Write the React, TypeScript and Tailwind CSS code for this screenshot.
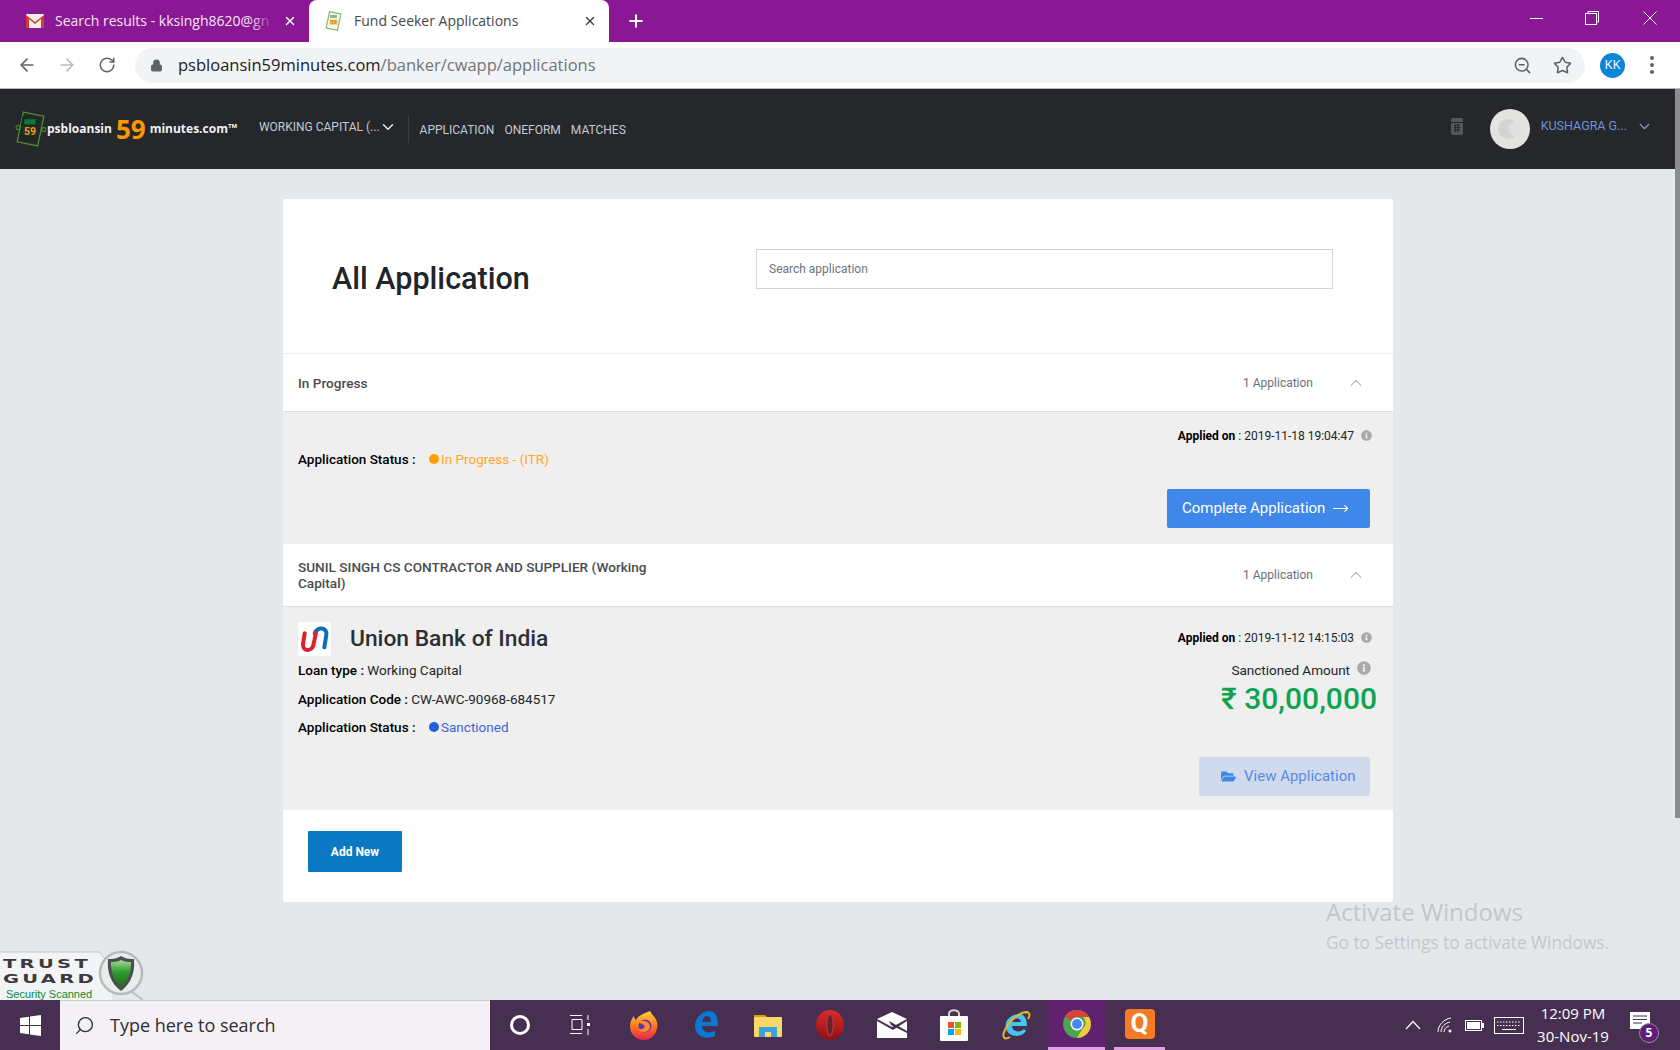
import { ArrowLeft, ArrowRight, ChevronDown, ChevronUp, Lock, MoveRight, Plus, RotateCw, Search, Star, X, ZoomOut } from 'lucide-react';
import { FaFolderOpen, FaInfoCircle } from 'react-icons/fa';

const sans = "font-['Roboto',sans-serif]";
const win = "font-['Open_Sans',sans-serif]";

function GmailIcon() {
  return (
    <svg width="18" height="14" viewBox="0 0 18 14">
      <rect width="18" height="14" rx="1" fill="#f3efe9" />
      <path d="M0 1 L9 8 L18 1 V14 H15 V5 L9 10 L3 5 V14 H0 Z" fill="#d5392c" />
    </svg>
  );
}

function PsbLogo() {
  return (
    <svg width="31" height="36" viewBox="0 0 30 35">
      <path d="M8 1 L28 5 L22 34 L2 30 Z" fill="none" stroke="#4f8f2f" strokeWidth="1.2" />
      <path d="M7 5 L24 7 L20 30 L4 27 Z" fill="#1b2a22" />
      <rect x="9" y="8" width="11" height="5" fill="#0f7a35" />
      <rect x="7" y="15" width="15" height="9" fill="#1c2f3d" />
      <text x="14.5" y="23" textAnchor="middle" fontSize="10" fontWeight="700" fill="#ff9800" fontFamily="Roboto">59</text>
      <circle cx="3" cy="16" r="2" fill="none" stroke="#4f8f2f" />
      <circle cx="28" cy="18" r="2" fill="none" stroke="#4f8f2f" />
    </svg>
  );
}

function TabFavicon() {
  return (
    <svg width="17" height="20" viewBox="0 0 30 35">
      <path d="M8 1 L28 5 L22 34 L2 30 Z" fill="#f4f8ee" stroke="#86b46a" strokeWidth="2" />
      <rect x="9" y="7" width="12" height="5" fill="#7fb08c" />
      <rect x="8" y="15" width="14" height="9" fill="#f6c26a" />
      <text x="15" y="23" textAnchor="middle" fontSize="10" fontWeight="700" fill="#e88a00" fontFamily="Roboto">59</text>
    </svg>
  );
}

function TabStrip() {
  return (
    <div className={`flex h-[42px] items-end bg-[#8a1793] ${win}`}>
      <div className="flex h-[42px] w-[309px] items-center pl-[26px] pr-[10px]">
        <GmailIcon />
        <div className="relative ml-[11px] w-[220px] -translate-y-[1px]">
          <span className="whitespace-nowrap text-[14px] text-[#f4e6f5]">Search results - kksingh8620@gn</span>
          <div className="absolute inset-y-0 right-0 w-[26px] bg-gradient-to-r from-transparent to-[#8a1793]" />
        </div>
        <X size={14} strokeWidth={2.5} className="ml-[8px] text-white" />
      </div>
      <div className="flex h-[42px] w-[300px] items-center rounded-t-[8px] bg-white pl-[16px] pr-[12px]">
        <TabFavicon />
        <span className="ml-[12px] flex-1 -translate-y-[1px] text-[14px] text-[#45484c]">Fund Seeker Applications</span>
        <X size={14} strokeWidth={2.5} className="text-[#3c4043]" />
      </div>
      <div className="flex h-[42px] w-[54px] items-center justify-center">
        <Plus size={20} strokeWidth={2.5} className="text-white" />
      </div>
      <div className="ml-auto flex h-[42px] items-center text-white">
        <div className="flex w-[56px] justify-center"><div className="h-px w-[13px] -translate-y-[3px] bg-white" /></div>
        <div className="flex w-[56px] justify-center">
          <svg width="14" height="14" viewBox="0 0 14 14" fill="none" stroke="white" className="-translate-y-[3px]">
            <rect x="0.5" y="2.5" width="11" height="11" />
            <path d="M3 2.5 V0.5 H13.5 V11 H11.5" />
          </svg>
        </div>
        <div className="flex w-[60px] justify-center">
          <svg width="14" height="14" viewBox="0 0 14 14" stroke="white" className="-translate-y-[3px]"><path d="M0.5 0.5 L13.5 13.5 M13.5 0.5 L0.5 13.5" /></svg>
        </div>
      </div>
    </div>
  );
}

function Toolbar() {
  return (
    <div className={`flex h-[47px] items-center border-b border-[#b9b9b9] bg-white ${win}`}>
      <ArrowLeft size={20} strokeWidth={2} className="ml-[17px] text-[#5f6368]" />
      <ArrowRight size={20} strokeWidth={2} className="ml-[20px] text-[#b8babd]" />
      <RotateCw size={18} strokeWidth={2} className="ml-[21px] text-[#5f6368]" />
      <div className="ml-[19px] flex h-[35px] w-[1450px] items-center rounded-full bg-[#f1f3f4] pl-[15px] pr-[13px]">
        <Lock size={13} fill="#5f6368" className="text-[#5f6368]" />
        <span className="ml-[15px] text-[16.5px] text-[#202124]">psbloansin59minutes.com<span className="text-[#70757a]">/banker/cwapp/applications</span></span>
        <ZoomOut size={19} strokeWidth={2} className="ml-auto text-[#5f6368]" />
        <Star size={19} strokeWidth={2} className="ml-[21px] text-[#5f6368]" />
      </div>
      <div className="ml-[15px] flex h-[25px] w-[25px] items-center justify-center rounded-full bg-[#0b86d6] text-[13px] text-white">KK</div>
      <div className="ml-[25px] flex flex-col gap-[3px]">
        <div className="h-[4px] w-[4px] rounded-full bg-[#5f6368]" />
        <div className="h-[4px] w-[4px] rounded-full bg-[#5f6368]" />
        <div className="h-[4px] w-[4px] rounded-full bg-[#5f6368]" />
      </div>
    </div>
  );
}

function NavBar() {
  return (
    <header className={`flex h-[80px] items-center bg-[#25272a] ${sans}`}>
      <div className="ml-[15px] flex items-center">
        <PsbLogo />
        <span className={`ml-[1px] text-[12px] font-bold text-[#eef0f1] ${win}`}>psbloansin</span>
        <span className={`ml-[4px] text-[26px] leading-none font-bold text-[#ff9800] ${win}`}>59</span>
        <span className={`ml-[4px] text-[12px] font-bold text-[#eef0f1] ${win}`}>minutes.com</span>
        <span className="-mt-[8px] text-[6px] font-bold text-white">TM</span>
      </div>
      <div className="ml-[22px] flex -translate-y-[2px] items-center text-[12px] text-[#c3cad4]">
        <span>WORKING CAPITAL (...</span>
        <ChevronDown size={18} strokeWidth={2} className="-ml-[1px] text-[#e4e8eb]" />
      </div>
      <div className="ml-[11px] h-[27px] w-px bg-[#3c3e42]" />
      <nav className="ml-[11px] flex gap-[10px] pt-[2px] text-[12px] text-[#c3cad4]">
        <span>APPLICATION</span>
        <span>ONEFORM</span>
        <span>MATCHES</span>
      </nav>
      <svg width="12" height="17" viewBox="0 0 12 17" className="ml-auto -translate-y-[3px]">
        <rect width="12" height="17" rx="2" fill="#53565a" />
        <rect x="0" y="4" width="12" height="1" fill="#25272a" />
        <path d="M3 7 H9 M3 9.5 H9 M3 12 H9 M4.5 7 V14 M7 7 V14" stroke="#25272a" />
      </svg>
      <div className="relative ml-[27px] h-[40px] w-[40px] rounded-full bg-[#e3e4e2]">
        <div className="absolute top-[10px] left-[8px] h-[20px] w-[20px] rounded-full bg-[#d3d4d2]" />
        <div className="absolute top-[13px] left-[18px] h-[14px] w-[14px] rounded-full bg-[#dfe0de]" />
      </div>
      <span className="ml-[11px] -translate-y-[3px] text-[12.5px] text-[#6f92d8]">KUSHAGRA G...</span>
      <ChevronDown size={17} strokeWidth={1.75} className="mr-[22px] ml-[9px] -translate-y-[3px] text-[#8ea6d8]" />
    </header>
  );
}

function SectionRow({ title, height, titleClass }: { title: string; height: string; titleClass?: string }) {
  return (
    <div className={`flex items-center border-b border-[#dcdfe1] pr-[27px] pl-[15px] ${height}`}>
      <div className={`text-[13.6px] leading-[16px] font-medium text-[#4a4c4f] ${titleClass ?? ''}`}>{title}</div>
      <span className="ml-auto text-[12px] text-[#6c7075]">1 Application</span>
      <ChevronUp size={20} strokeWidth={1.25} className="ml-[33px] text-[#a3a6a9]" />
    </div>
  );
}

function Applied({ date }: { date: string }) {
  return (
    <div className="-mr-[2px] flex items-center justify-end text-[12px] leading-[18px] text-[#212529]">
      <span><b className="font-bold text-black">Applied on</b> : {date}</span>
      <FaInfoCircle size={11} className="ml-[7px] -translate-y-[1px] text-[#a9a9a9]" />
    </div>
  );
}

function Status({ color, dot, label }: { color: string; dot: string; label: string }) {
  return (
    <div className="flex items-center text-[13.5px] leading-[20px]">
      <span className="w-[131px] font-medium text-black">Application Status :</span>
      <span className={`h-[10px] w-[10px] rounded-full ${dot}`} />
      <span className={`ml-[2px] ${color}`}>{label}</span>
    </div>
  );
}

function UnionLogo() {
  return (
    <div className="flex h-[34px] w-[33px] items-center justify-center rounded-[3px] bg-white">
      <svg width="33" height="34" viewBox="0 0 99 102" fill="none" strokeWidth="12" strokeLinecap="round">
        <path d="M50 34 C58 12 88 16 85 38 L79 76" stroke="#0a6fb7" />
        <path d="M20 34 L15 66 C13 88 40 90 46 70 L54 32" stroke="#e0202f" />
      </svg>
    </div>
  );
}

function AppCard() {
  return (
    <section className={`ml-[283px] w-[1110px] rounded-[2px] bg-white ${sans}`}>
      <div className="flex h-[155px] items-start border-b border-[#eceeef] pt-[50px] pr-[60px] pl-[49px]">
        <h1 className="mt-[10px] text-[30.5px] leading-[40px] font-medium text-[#212529]">All Application</h1>
        <div className="ml-auto flex h-[40px] w-[577px] items-center border border-[#ced4da] bg-white pl-[12px] text-[12px] text-[#6c757d]">
          Search application
        </div>
      </div>

      <SectionRow title="In Progress" height="h-[58px]" />
      <div className="h-[132px] bg-[#efefef] pt-[15px] pr-[23px] pl-[15px]">
        <div className="flex items-start">
          <div className="pt-[22px]">
            <Status color="text-[#ffa726]" dot="bg-[#ff9c00]" label="In Progress - (ITR)" />
          </div>
          <div className="ml-auto"><Applied date="2019-11-18 19:04:47" /></div>
        </div>
        <div className="mt-[20px] flex justify-end">
          <button className="flex h-[39px] w-[203px] items-center rounded-[2px] bg-[#3f87e8] pl-[15px] text-[15px] text-white">
            Complete Application
            <MoveRight size={17} strokeWidth={1.5} className="ml-[7px]" />
          </button>
        </div>
      </div>

      <SectionRow title="SUNIL SINGH CS CONTRACTOR AND SUPPLIER (Working Capital)" height="h-[63px]" titleClass="w-[370px]" />
      <div className="flex h-[203px] bg-[#efefef] pr-[23px] pl-[15px]">
        <div className="pt-[15px]">
          <div className="flex h-[34px] items-center">
            <UnionLogo />
            <span className="ml-[19px] text-[22.8px] font-medium text-[#2b3036]">Union Bank of India</span>
          </div>
          <div className="mt-[4px] text-[13.5px] leading-[20px] text-[#212529]"><b className="font-medium text-black">Loan type :</b> Working Capital</div>
          <div className="mt-[9px] text-[13.5px] leading-[20px] text-[#212529]"><b className="font-medium text-black">Application Code :</b> CW-AWC-90968-684517</div>
          <div className="mt-[8px]"><Status color="text-[#3f62d8]" dot="bg-[#2160dd]" label="Sanctioned" /></div>
        </div>
        <div className="ml-auto flex flex-col items-end pt-[22px]">
          <Applied date="2019-11-12 14:15:03" />
          <div className="-mr-[1px] mt-[13px] flex items-center text-[13.5px] leading-[20px] text-[#212529]">
            Sanctioned Amount
            <FaInfoCircle size={14} className="ml-[7px] -mt-[4px] text-[#a9a9a9]" />
          </div>
          <div className="-mr-[7px] mt-[1px] text-[30px] leading-[36px] font-medium text-[#0da44f]">₹ 30,00,000</div>
          <button className="mt-[40px] flex h-[39px] w-[171px] items-center rounded-[2px] bg-[#cfdbed] pl-[22px] text-[15px] text-[#5b8ae0]">
            <FaFolderOpen size={15} className="mr-[8px] text-[#3f87e8]" />
            View Application
          </button>
        </div>
      </div>

      <div className="h-[92px] pt-[21px] pl-[25px]">
        <button className="h-[41px] w-[94px] rounded-[1px] bg-[#0a78c2] text-[12px] font-bold text-white">Add New</button>
      </div>
    </section>
  );
}

function TrustGuard() {
  return (
    <div className="absolute bottom-0 left-0 h-[53px] w-[146px]">
      <svg width="146" height="53" viewBox="0 0 146 53" className="absolute inset-0">
        <defs>
          <linearGradient id="shield" x1="0" y1="0" x2="0" y2="1">
            <stop offset="0" stopColor="#a5dc97" />
            <stop offset="0.45" stopColor="#2f9a2c" />
            <stop offset="1" stopColor="#1e6e1e" />
          </linearGradient>
        </defs>
        <path d="M0 5 H99 L112 20 L112 53 H0 Z" fill="#f3f4f5" />
        <path d="M0 5 H99 L106 13" fill="none" stroke="#c4c6c8" />
        <path d="M128 42 L143 53" stroke="#bdbfc1" strokeWidth="2" />
        <circle cx="121" cy="26" r="21" fill="#e9ecec" stroke="#b8baba" strokeWidth="2.5" />
        <path d="M121 9 C116 12 112 12 108 12 C107 24 110 36 121 44 C132 36 135 24 134 12 C130 12 126 12 121 9 Z" fill="#4b4f4f" />
        <path d="M121 13 C117 15 114 15 111 15 C111 25 113 33 121 40 C129 33 131 25 131 15 C128 15 125 15 121 13 Z" fill="url(#shield)" />
      </svg>
      <div className="absolute top-[9px] left-[3px] origin-left scale-x-[150%] font-['DejaVu_Sans',sans-serif] text-[13px] leading-[15px] font-bold tracking-[2.2px] text-[#3b3b3c]">
        <div>TRUST</div>
        <div>GUARD</div>
      </div>
      <div className="absolute top-[40px] left-[6px] font-['Liberation_Sans',sans-serif] text-[11px] leading-[14px] text-[#0a8a32]">Security Scanned</div>
    </div>
  );
}

function AppIcons() {
  return (
    <>
      <div className="flex w-[62px] justify-center">
        <svg width="28" height="31" viewBox="0 0 28 31">
          <defs>
            <linearGradient id="fox" x1="0" y1="0" x2="0" y2="1">
              <stop offset="0" stopColor="#ffd23a" />
              <stop offset="0.5" stopColor="#ff7a1f" />
              <stop offset="1" stopColor="#e8254e" />
            </linearGradient>
          </defs>
          <path d="M20 1 C21 4 25 6 27 12 C29 21 23 30 14 30 C6 30 0 24 0 16 C0 12 2 8 4 6 C4 8 5 9 6 10 C8 6 12 4 20 1 Z" fill="url(#fox)" />
          <circle cx="15" cy="16" r="6.5" fill="#5b3aa8" />
          <path d="M8 12 C12 9 21 11 20 18 C18 23 11 23 8 19 C13 20 16 18 14 15 Z" fill="#ff8a2a" />
        </svg>
      </div>
      <div className="flex w-[62px] justify-center">
        <svg width="26" height="30" viewBox="0 0 26 30" fill="none">
          <path d="M22 26 C14 30 3 27 2 17 C1 9 9 1 16 1 C23 1 25 8 25 16 H9 C9 22 16 24 22 21 Z M9 12 H18 C18 8 16 6 14 6 C11 6 10 9 9 12 Z" fill="#0a78d4" fillRule="evenodd" />
        </svg>
      </div>
      <div className="flex w-[62px] justify-center">
        <svg width="28" height="24" viewBox="0 0 28 24">
          <path d="M0 2 H11 L13 4 H13 V7 H0 Z" fill="#d49f14" />
          <rect y="4" width="28" height="20" rx="1" fill="#fbd669" />
          <path d="M5 24 V14 H23 V24 H17 V19 H11 V24 Z" fill="#3aa3dd" />
        </svg>
      </div>
      <div className="flex w-[62px] justify-center">
        <svg width="28" height="30" viewBox="0 0 28 30">
          <defs>
            <linearGradient id="opera" x1="0" y1="0" x2="0" y2="1">
              <stop offset="0" stopColor="#e02a2a" />
              <stop offset="1" stopColor="#8f1010" />
            </linearGradient>
          </defs>
          <ellipse cx="14" cy="15" rx="14" ry="15" fill="url(#opera)" />
          <ellipse cx="14" cy="15" rx="4" ry="11.5" fill="#a83a3a" />
          <ellipse cx="14" cy="15" rx="2.5" ry="10" fill="#6b1f2a" />
        </svg>
      </div>
      <div className="flex w-[62px] justify-center">
        <svg width="30" height="26" viewBox="0 0 30 26">
          <path d="M0 7 L15 0 L30 7 L15 15 Z" fill="white" />
          <path d="M0 9 L16 18 L30 9 V26 H0 Z" fill="white" />
          <path d="M12 9 L30 19 V21 L14 13 Z" fill="#462f51" />
        </svg>
      </div>
      <div className="flex w-[62px] justify-center">
        <svg width="28" height="32" viewBox="0 0 28 32">
          <path d="M9 8 V5 C9 0 19 0 19 5 V8" fill="none" stroke="#d7d3da" strokeWidth="2" />
          <rect y="7" width="28" height="25" rx="1" fill="white" />
          <rect x="8" y="13" width="6" height="6" fill="#f25022" />
          <rect x="15" y="13" width="6" height="6" fill="#7fba00" />
          <rect x="8" y="20" width="6" height="6" fill="#00a4ef" />
          <rect x="15" y="20" width="6" height="6" fill="#ffb900" />
        </svg>
      </div>
      <div className="flex w-[62px] justify-center">
        <svg width="30" height="30" viewBox="0 0 30 30" fill="none">
          <path d="M25 21 C21 28 7 28 5 18 C3 9 12 4 18 4 C24 4 26 10 26 16 H11 C11 22 20 23 23 19 Z M11 12 H20 C20 8 13 7 11 12 Z" fill="#43c7f0" fillRule="evenodd" />
          <path d="M27 2 C20 1 8 10 3 22 C1 28 4 30 9 27" stroke="#e5b42a" strokeWidth="2" />
          <path d="M24 3 C28 1 30 4 27 9" stroke="#e5b42a" strokeWidth="2" />
        </svg>
      </div>
    </>
  );
}

function Taskbar() {
  return (
    <footer className={`flex h-[50px] bg-[#462f51] ${win}`}>
      <div className="flex w-[60px] items-center justify-center">
        <svg width="21" height="21" viewBox="0 0 21 21" fill="white">
          <path d="M0 3 L9 1.7 V10 H0 Z M10 1.5 L21 0 V10 H10 Z M0 11 H9 V19.3 L0 18 Z M10 11 H21 V21 L10 19.5 Z" />
        </svg>
      </div>
      <div className="flex w-[430px] items-center border-t border-[#c9c9cc] bg-[#f3f1f5] pl-[14px] text-[18px] text-[#2d2d30]">
        <Search size={21} strokeWidth={1.5} className="-scale-x-100" />
        <span className="ml-[15px]">Type here to search</span>
      </div>
      <div className="flex w-[60px] items-center justify-center">
        <div className="h-[20px] w-[20px] rounded-full border-[3px] border-white" />
      </div>
      <div className="flex w-[60px] items-center justify-center">
        <svg width="22" height="20" viewBox="0 0 22 20" stroke="white" fill="none">
          <path d="M1 0.5 H13 M3 4.5 H13 V14.5 H3 Z M1 18.5 H13 M19 0 V5 M19 14 V20" />
          <rect x="18" y="8" width="3" height="3" fill="white" stroke="none" />
        </svg>
      </div>
      <div className="ml-[3px] flex items-center"><AppIcons /></div>
      <div className="ml-[1px] flex w-[57px] items-center justify-center border-b-[3px] border-[#e29ee6] bg-[#60226f]">
        <svg width="28" height="28" viewBox="0 0 28 28">
          <circle cx="14" cy="14" r="14" fill="#4ba651" />
          <path d="M14 0 A14 14 0 0 1 26 7 H14 A7 7 0 0 0 7.5 11 L2 6 A14 14 0 0 1 14 0 Z" fill="#d8443a" />
          <path d="M26 7 A14 14 0 0 1 14 28 L20 18 A7 7 0 0 0 20 7 Z" fill="#f6c83d" />
          <circle cx="14" cy="14" r="6.5" fill="white" />
          <circle cx="14" cy="14" r="5" fill="#4b87ee" />
        </svg>
      </div>
      <div className="ml-[9px] flex w-[51px] items-center justify-center border-b-[3px] border-[#e29ee6]">
        <div className={`flex h-[30px] w-[30px] items-center justify-center rounded-[4px] bg-[#f57a23] text-[26px] font-bold text-white ${sans}`}>Q</div>
      </div>
      <div className="ml-auto flex items-center pr-[30px] text-white">
        <svg width="16" height="10" viewBox="0 0 16 10" fill="none" stroke="white" strokeWidth="1.2"><path d="M1 9 L8 1.5 L15 9" /></svg>
        <svg width="16" height="16" viewBox="0 0 16 16" fill="none" stroke="white" className="ml-[16px]">
          <path d="M1 15 C1 8 7 2 14 1 M4 15 C4 10 8 6 13 5 M7 15 C7 12 9 10 12 9" />
          <circle cx="13" cy="14" r="1.5" fill="white" stroke="none" />
        </svg>
        <svg width="19" height="11" viewBox="0 0 19 11" className="ml-[12px]">
          <rect x="0.5" y="0.5" width="16" height="10" fill="none" stroke="white" />
          <rect x="2" y="2" width="13" height="7" fill="white" />
          <rect x="17" y="3" width="2" height="5" fill="white" />
        </svg>
        <svg width="30" height="17" viewBox="0 0 30 17" fill="none" stroke="white" className="ml-[10px]">
          <rect x="0.5" y="0.5" width="29" height="16" />
          <path d="M3 5 H27 M3 8.5 H27" strokeDasharray="1.5 1.5" />
          <path d="M8 12.5 H22" />
        </svg>
        <div className="ml-[11px] flex w-[76px] flex-col items-center text-[15px] leading-[23px]">
          <span>12:09 PM</span>
          <span>30-Nov-19</span>
        </div>
        <div className="relative ml-[19px] h-[30px] w-[20px]">
          <svg width="20" height="17" viewBox="0 0 20 17" className="absolute top-[2px] left-0">
            <path d="M0 0 H20 V17 H0 Z" fill="white" />
            <path d="M3 4 H17 M3 7.5 H17 M3 11 H12" stroke="#462f51" />
          </svg>
          <div className="absolute top-[13px] left-[9px] flex h-[20px] w-[20px] items-center justify-center rounded-full border border-[#9f8aa8] bg-[#5d1f74] text-[12px] font-bold">5</div>
        </div>
      </div>
    </footer>
  );
}

export default function App() {
  return (
    <div className="flex h-[1050px] w-[1680px] flex-col overflow-hidden bg-[#e4e8eb]">
      <TabStrip />
      <Toolbar />
      <div className="relative flex min-h-0 flex-1">
        <main className="min-w-0 flex-1">
          <NavBar />
          <div className="pt-[30px]">
            <AppCard />
          </div>
        </main>
        <div className="w-[5px]">
          <div className="h-[729px] bg-[#8c8c8c]" />
        </div>
        <TrustGuard />
        <div className={`absolute top-[807px] left-[1326px] text-[#c3c6c9] ${win}`}>
          <div className="text-[24px] leading-[32px]">Activate Windows</div>
          <div className="text-[17.3px] leading-[30px]">Go to Settings to activate Windows.</div>
        </div>
      </div>
      <Taskbar />
    </div>
  );
}
